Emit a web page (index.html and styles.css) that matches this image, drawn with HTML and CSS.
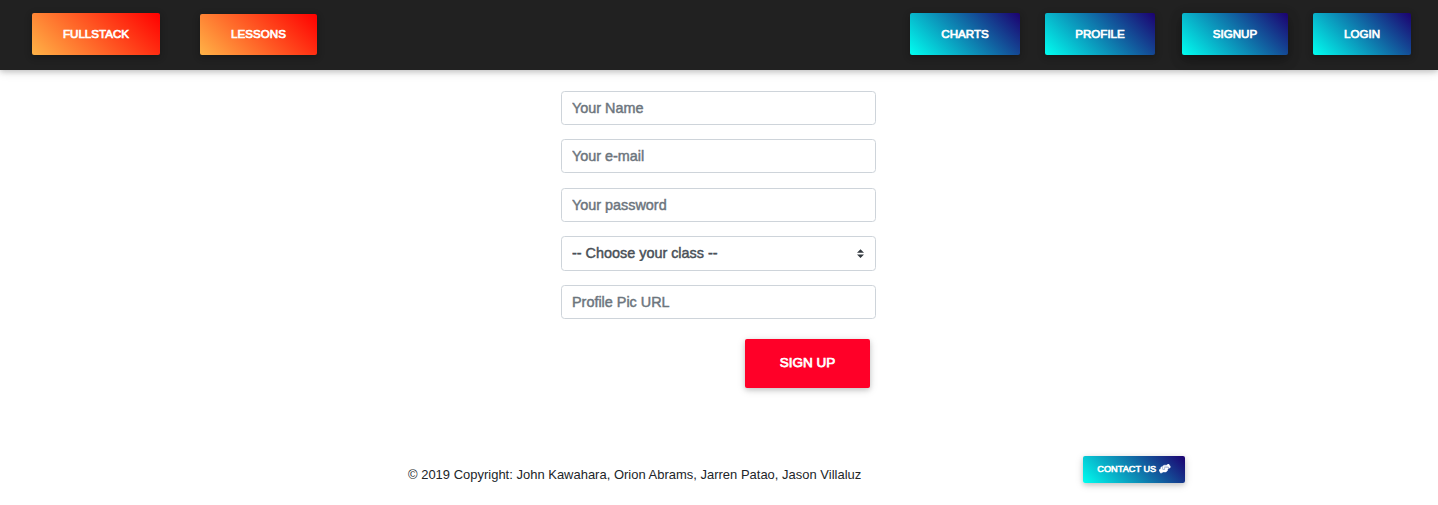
FILE: index.html
```html
<!DOCTYPE html>
<html lang="en">
<head>
<meta charset="utf-8">
<title>Sign up</title>
<link rel="stylesheet" href="styles.css">
</head>
<body>
<nav class="navbar">
  <a class="btn warm fullstack">FULLSTACK</a>
  <a class="btn warm lessons">LESSONS</a>
  <div class="nav-right">
    <a class="btn cool charts">CHARTS</a>
    <a class="btn cool profile">PROFILE</a>
    <a class="btn cool signup">SIGNUP</a>
    <a class="btn cool login">LOGIN</a>
  </div>
</nav>
<form class="form">
  <input class="field" type="text" placeholder="Your Name">
  <input class="field" type="email" placeholder="Your e-mail">
  <input class="field password" type="password" placeholder="Your password">
  <div class="select-wrap">
    <select class="field select"><option>-- Choose your class --</option></select>
    <svg class="arrows" viewBox="0 0 4 5"><path fill="#343a40" d="M2 0L0 2h4zm0 5L0 3h4z"/></svg>
  </div>
  <input class="field" type="text" placeholder="Profile Pic URL">
  <button class="submit" type="button">SIGN UP</button>
</form>
<footer class="footer">
  <span class="copyright">© 2019 Copyright: John Kawahara, Orion Abrams, Jarren Patao, Jason Villaluz</span>
  <a class="contact cool">CONTACT US
    <svg class="hands" viewBox="0 0 640 512"><path fill="#fff" stroke="#fff" stroke-width="22" d="M488 192H336v56c0 39.700-32.300 72-72 72s-72-32.300-72-72V126.400l-64.900 39C107.800 176.900 96 197.800 96 220.200v47.300l-80 46.200C.7 322.500-4.600 342.100 4.300 357.400l80 138.600c8.800 15.300 28.400 20.500 43.700 11.700L231.400 448H368c35.300 0 64-28.700 64-64h16c17.700 0 32-14.300 32-32v-64h8c13.300 0 24-10.700 24-24v-48c0-13.300-10.700-24-24-24zm147.700-37.400L555.700 16C546.900.7 527.300-4.500 512 4.300L408.600 64H306.400c-12 0-23.700 3.400-33.900 9.700L239 94.600c-9.400 5.800-15 16.100-15 27.100V248c0 22.100 17.900 40 40 40s40-17.900 40-40v-88h184c30.900 0 56 25.100 56 56v28.500l80-46.200c15.300-8.900 20.500-28.400 11.700-43.700z"/></svg>
  </a>
</footer>
</body>
</html>
```
FILE: styles.css
```css
* { box-sizing: border-box; }
body {
  margin: 0;
  height: 505px;
  overflow: hidden;
  background: #fff;
  color: #212529;
  font-family: "Liberation Sans", Arial, sans-serif;
}
.navbar {
  display: flex;
  height: 70px;
  padding: 13px 27px 0 32px;
  background: #212121;
  box-shadow: 0 2px 5px rgba(0,0,0,.16), 0 2px 10px rgba(0,0,0,.12);
}
.btn {
  display: flex;
  align-items: center;
  justify-content: center;
  height: 42px;
  padding-bottom: 2px;
  border-radius: 2px;
  color: #fff;
  font-size: 11.6px;
  -webkit-text-stroke: .7px #fff;
  box-shadow: 0 2px 5px rgba(0,0,0,.16), 0 2px 10px rgba(0,0,0,.12);
}
.warm { background: linear-gradient(45deg, #ffb347, #f00); }
.cool { background: linear-gradient(45deg, #00fff0, #1c0070); }
.fullstack { width: 128px; }
.lessons { width: 117px; height: 41px; margin: 1px 0 0 40px; }
.nav-right { display: flex; margin-left: auto; }
.charts { width: 110px; }
.profile { width: 110px; margin-left: 25px; }
.signup {
  width: 106px;
  margin-left: 27px;
  box-shadow: 0 5px 11px rgba(0,0,0,.28), 0 4px 15px rgba(0,0,0,.15);
}
.login { width: 98px; margin-left: 25px; }
.form {
  display: flex;
  flex-direction: column;
  width: 315px;
  margin: 21px 0 0 561px;
}
.field {
  display: block;
  width: 100%;
  height: 34px;
  margin: 0 0 14px;
  padding: 0 10px;
  border: 1px solid #ced4da;
  border-radius: 3.6px;
  background: #fff;
  color: #495057;
  font: 14.4px "Liberation Sans", Arial, sans-serif;
  -webkit-text-stroke: .45px currentColor;
}
.field::placeholder { color: #6c757d; opacity: 1; }
.password { margin-top: 1px; }
.select-wrap { position: relative; }
.select { appearance: none; height: 35px; padding-bottom: 2px; }
.arrows { position: absolute; top: 13px; right: 12px; width: 7px; height: 9px; }
.submit {
  align-self: flex-end;
  width: 125px;
  height: 49px;
  margin: 6px 6px 0 0;
  padding: 0 0 2px;
  border: 0;
  border-radius: 2px;
  background: #ff0028;
  color: #fff;
  font: 13.5px "Liberation Sans", Arial, sans-serif;
  -webkit-text-stroke: .75px #fff;
  box-shadow: 0 2px 5px rgba(0,0,0,.16), 0 2px 10px rgba(0,0,0,.12);
}
.footer {
  display: flex;
  justify-content: space-between;
  padding: 68px 253px 0 408px;
}
.copyright { padding-top: 11px; font-size: 12.96px; line-height: 16px; letter-spacing: .015px; white-space: nowrap; }
.contact {
  display: flex;
  align-items: center;
  justify-content: center;
  gap: 3px;
  width: 102px;
  height: 27px;
  padding-bottom: 1px;
  border-radius: 2px;
  color: #fff;
  font-size: 9.2px;
  white-space: nowrap;
  -webkit-text-stroke: .6px #fff;
  box-shadow: 0 2px 5px rgba(0,0,0,.16), 0 2px 10px rgba(0,0,0,.12);
}
.hands { width: 11.5px; height: 9.2px; }
```
